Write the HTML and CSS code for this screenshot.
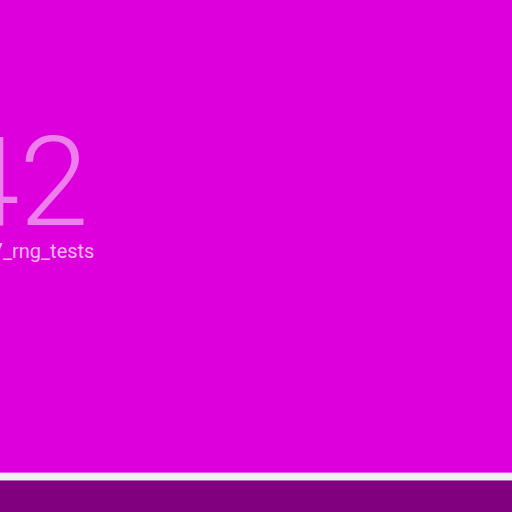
FILE: index.html
```html
<!DOCTYPE html>
<html>
<head>
<meta charset="utf-8">
<link rel="stylesheet" href="styles.css">
</head>
<body>
<div class="screen">
  <main class="stage">
    <div class="card">
      <div class="value">42</div>
      <div class="label">test_0007_rng_tests</div>
    </div>
  </main>
  <div class="divider"></div>
  <footer class="bar"></footer>
</div>
</body>
</html>
```
FILE: styles.css
```css
html, body {
  margin: 0;
  padding: 0;
  width: 512px;
  height: 512px;
  overflow: hidden;
  background: #dd00dd;
  font-family: Roboto, "Noto Sans", sans-serif;
}
.screen {
  display: flex;
  flex-direction: column;
  height: 512px;
}
.stage {
  flex: 1;
  display: flex;
  overflow: hidden;
}
.card {
  margin-top: 124px;
  margin-left: -50px;
  display: flex;
  flex-direction: column;
  color: rgba(255, 255, 255, 0.5);
}
.value {
  font-weight: 300;
  font-size: 125px;
  line-height: 117px;
}
.label {
  font-size: 20px;
  line-height: 20px;
  margin-left: -35px;
  white-space: nowrap;
  color: rgba(255, 255, 255, 0.72);
}
.divider {
  height: 7px;
  background: #f0f0f0;
  border-top: 1px solid #ee55ee;
  border-bottom: 1px solid #b070b0;
}
.bar {
  height: 31px;
  background: #800080;
}
```
